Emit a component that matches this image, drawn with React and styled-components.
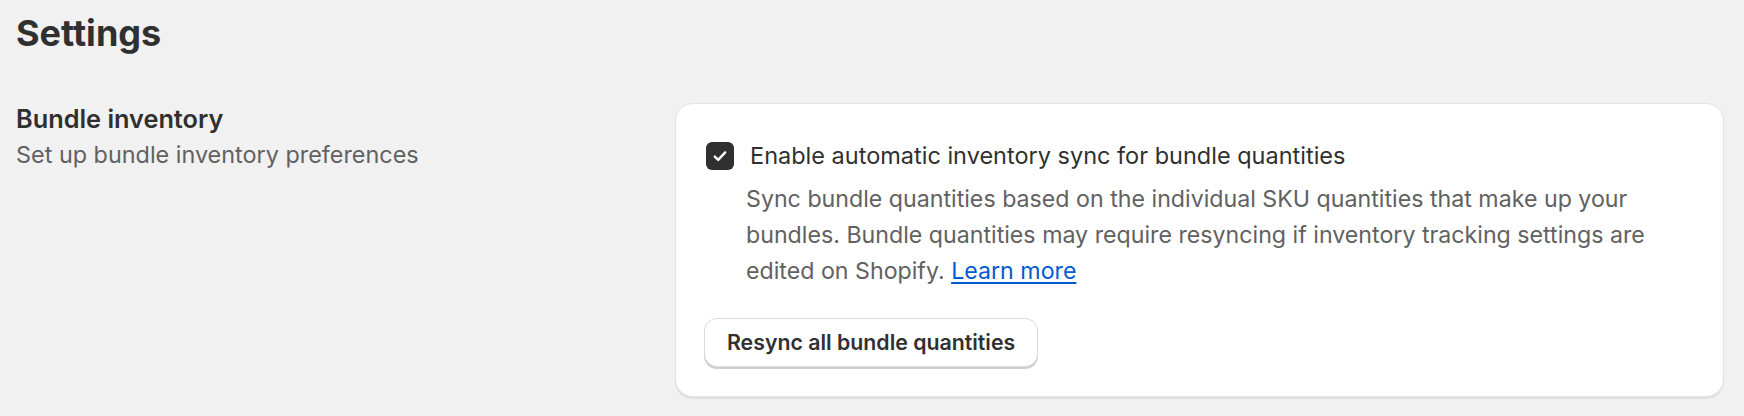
import React from "react";
import styled, { createGlobalStyle } from "styled-components";

const GlobalStyle = createGlobalStyle`
  html, body {
    margin: 0;
    padding: 0;
    background: #f1f1f1;
  }
  body {
    font-family: "Inter", "Noto Sans", sans-serif;
    color: #303030;
    -webkit-font-smoothing: antialiased;
  }
`;

const Page = styled.div`
  padding: 11px 20px 20px 16px;
`;

const Title = styled.h1`
  margin: 0 0 48px 0;
  font-size: 36px;
  line-height: 44px;
  font-weight: 700;
  color: #303030;
`;

const Section = styled.div`
  display: grid;
  grid-template-columns: 659px 1fr;
  align-items: start;
`;

const Annotation = styled.div`
  display: flex;
  flex-direction: column;
`;

const SectionHeading = styled.h2`
  margin: 0;
  font-size: 25.3px;
  line-height: 32px;
  font-weight: 600;
  color: #303030;
`;

const SectionText = styled.p`
  margin: 2px 0 0 0;
  font-size: 23.4px;
  line-height: 36px;
  color: #616161;
`;

const Card = styled.div`
  background: #ffffff;
  border: 1px solid #e3e3e3;
  border-radius: 18px;
  box-shadow: 0 2px 1px rgba(0, 0, 0, 0.07);
  padding: 34px 28px 29px 28px;
`;

const CheckRow = styled.label`
  display: flex;
  align-items: center;
  gap: 16px;
  padding-left: 2px;
  font-size: 23.5px;
  line-height: 35px;
  color: #303030;
  cursor: pointer;
`;

const Box = styled.span`
  flex: 0 0 auto;
  display: flex;
  align-items: center;
  justify-content: center;
  width: 28px;
  height: 28px;
  border-radius: 6px;
  background: ${(p) => (p.checked ? "#303030" : "#ffffff")};
  border: ${(p) => (p.checked ? "none" : "1px solid #8a8a8a")};
`;

const HelpText = styled.p`
  margin: 8px 0 0 42px;
  font-size: 23.2px;
  line-height: 36px;
  color: #616161;
`;

const Link = styled.a`
  color: #005bd3;
  text-decoration: underline;
  text-underline-offset: 3px;
`;

const Actions = styled.div`
  margin-top: 29px;
  display: flex;
`;

const Button = styled.button`
  font-family: "Inter", "Noto Sans", sans-serif;
  font-size: 21.3px;
  font-weight: 600;
  line-height: 28px;
  color: #303030;
  background: #ffffff;
  border: 1px solid #dcdcdc;
  border-radius: 13px;
  padding: 9px 22px 10px;
  box-shadow: 0 2px 0 #cfcfcf;
  cursor: pointer;
`;

const Check = () => (
  <svg width="18" height="18" viewBox="0 0 18 18" fill="none">
    <path
      d="M3.8 9.6l3.4 3.3L14.2 5.4"
      stroke="#ffffff"
      strokeWidth="2.4"
      strokeLinecap="round"
      strokeLinejoin="round"
    />
  </svg>
);

export default function App() {
  return (
    <Page>
      <GlobalStyle />
      <Title>Settings</Title>
      <Section>
        <Annotation>
          <SectionHeading>Bundle inventory</SectionHeading>
          <SectionText>Set up bundle inventory preferences</SectionText>
        </Annotation>
        <Card>
          <CheckRow>
            <Box checked>
              <Check />
            </Box>
            Enable automatic inventory sync for bundle quantities
          </CheckRow>
          <HelpText>
            Sync bundle quantities based on the individual SKU quantities that
            make up your
            <br />
            bundles. Bundle quantities may require resyncing if inventory
            tracking settings are
            <br />
            edited on Shopify. <Link href="#">Learn more</Link>
          </HelpText>
          <Actions>
            <Button>Resync all bundle quantities</Button>
          </Actions>
        </Card>
      </Section>
    </Page>
  );
}
